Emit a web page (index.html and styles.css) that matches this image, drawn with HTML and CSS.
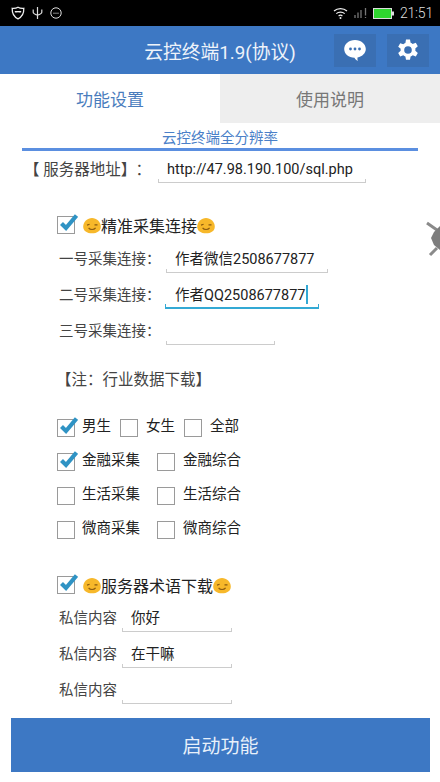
FILE: index.html
```html
<!DOCTYPE html>
<html lang="zh">
<head>
<meta charset="utf-8">
<title>云控终端</title>
<link rel="stylesheet" href="styles.css">
</head>
<body>
<svg class="defs" width="0" height="0" aria-hidden="true">
  <symbol id="tick" viewBox="0 0 20 20">
    <path d="M3.5 10.5 L8 15 L18.5 2.5" fill="none" stroke="#2f93c4" stroke-width="4.2"/>
  </symbol>
  <symbol id="wink" viewBox="0 0 18 16">
    <path d="M9 .4C13.5.4 17.8 4.300 17.800 9.200 17.800 13.400 14 15.800 9 15.800 4 15.800.2 13.400.2 9.200.2 4.300 4.500.4 9 .4Z" fill="#f7b82a"/>
    <path d="M4 7.600 6.600 6.800M11.500 7.400h3" stroke="#8a5a10" stroke-width="1.100" fill="none"/>
    <path d="M5.600 10.400C7 12.600 11 12.600 12.600 10.400" stroke="#8a5a10" stroke-width="1.100" fill="none"/>
  </symbol>
</svg>
<div class="page">
  <div class="status">
    <div class="status-left">
      <svg width="14" height="14" viewBox="0 0 14 14"><path d="M7 1.200C9 2.400 11 2.500 12.800 2.300 13 7.500 11 11 7 12.800 3 11 1 7.500 1.200 2.300 3 2.500 5 2.400 7 1.200Z" fill="none" stroke="#eee" stroke-width="1.300"/><path d="M3.800 5h6.400v1.200C9 7 8.400 6.400 7 6.200 5.600 6.400 5 7 3.800 6.200Z" fill="#eee"/></svg>
      <svg width="11" height="14" viewBox="0 0 11 14"><path d="M5.500 1v12M1.200 3.500v2.800C1.200 7.600 3 8.400 5.500 9.200 8 8.400 9.800 7.600 9.800 6.300V3.500" fill="none" stroke="#ddd" stroke-width="1.200"/></svg>
      <svg width="12" height="12" viewBox="0 0 12 12"><circle cx="6" cy="6" r="5.200" fill="none" stroke="#ddd" stroke-width="1"/><path d="M3.400 6.200h1.200M5.400 6.200h1.200M7.400 6.200h1.200" stroke="#ddd" stroke-width="1"/></svg>
    </div>
    <div class="status-right">
      <svg width="15" height="12" viewBox="0 0 15 12"><path d="M1 4C4.600.8 10.400.8 14 4M3.300 6.600C5.600 4.600 9.400 4.600 11.700 6.600M5.600 9C6.600 8.200 8.400 8.200 9.400 9" fill="none" stroke="#eee" stroke-width="1.200"/><circle cx="7.500" cy="11" r="1" fill="#eee"/></svg>
      <svg width="13" height="12" viewBox="0 0 13 12"><path d="M1 11V8M4 11V5.500M7 11V3M11.500 8.500V1M11.500 11V10" fill="none" stroke="#777" stroke-width="1.300"/></svg>
      <svg width="21" height="11" viewBox="0 0 21 11"><rect x=".5" y=".5" width="18" height="10" fill="#2fd62f" stroke="#ddd"/><rect x="19" y="3.500" width="2" height="4" fill="#ddd"/></svg>
      <span class="time">21:51</span>
    </div>
  </div>

  <header class="appbar">
    <div></div>
    <div class="title">云控终端1.9(协议)</div>
    <div class="actions">
      <div class="action">
        <svg width="24" height="24" viewBox="0 0 24 24"><path d="M12 2C5.800 2 1.200 6 1.200 11c0 4.900 4.500 8.700 10.300 8.800 .6 1.200 1.700 2.400 3.300 3.200-.4-1.200-.5-2.400-.3-3.500C19.500 18.400 22.800 15 22.800 11 22.800 6 18.200 2 12 2Z" fill="#fff"/><circle cx="7.500" cy="11" r="1.400" fill="#3a6fb3"/><circle cx="12" cy="11" r="1.400" fill="#3a6fb3"/><circle cx="16.500" cy="11" r="1.400" fill="#3a6fb3"/></svg>
      </div>
      <div class="action">
        <svg width="24" height="24" viewBox="0 0 24 24"><path fill="#fff" fill-rule="evenodd" d="M10 1.500h4l.6 3.200c.8.300 1.500.7 2.100 1.200l3.100-1.100 2 3.500-2.500 2.100c.1.400.1.800.1 1.200s0 .8-.1 1.200l2.500 2.100-2 3.500-3.100-1.100c-.6.500-1.300.9-2.100 1.200l-.6 3.200h-4l-.6-3.200c-.8-.3-1.500-.7-2.100-1.200l-3.100 1.100-2-3.500 2.500-2.100C4.600 12.800 4.600 12.400 4.600 12s0-.8.100-1.200L2.200 8.700l2-3.500 3.100 1.100c.6-.5 1.300-.9 2.100-1.200ZM12 8.200a3.800 3.800 0 1 0 0 7.600 3.800 3.800 0 0 0 0-7.600Z"/></svg>
      </div>
    </div>
  </header>

  <nav class="tabs">
    <div class="tab tab-on">功能设置</div>
    <div class="tab tab-off">使用说明</div>
  </nav>

  <div class="subtitle">云控终端全分辨率</div>

  <div class="server">
    <span class="server-label">【 服务器地址】<span class="colon">：</span></span>
    <div class="field field-server">http://47.98.190.100/sql.php</div>
  </div>

  <div class="check-row head-one">
    <span class="cb"><svg class="tick"><use href="#tick"/></svg></span>
    <svg class="emoji"><use href="#wink"/></svg><span class="head-text">精准采集连接</span><svg class="emoji"><use href="#wink"/></svg>
  </div>

  <div class="form-row first-link">
    <span class="label label-wide">一号采集连接：</span>
    <div class="field field-one">作者微信2508677877</div>
  </div>
  <div class="form-row">
    <span class="label label-wide">二号采集连接：</span>
    <div class="field field-two">作者QQ2508677877<span class="caret"></span></div>
  </div>
  <div class="form-row">
    <span class="label label-wide">三号采集连接：</span>
    <div class="field field-three"></div>
  </div>

  <div class="note">【注：行业数据下载】</div>

  <div class="opts">
    <div class="opt-row">
      <span class="cb"><svg class="tick"><use href="#tick"/></svg></span><span class="opt-text gap-a">男生</span>
      <span class="cb"></span><span class="opt-text wide gap-a">女生</span>
      <span class="cb"></span><span class="opt-text wide">全部</span>
    </div>
    <div class="opt-row">
      <span class="cb"><svg class="tick"><use href="#tick"/></svg></span><span class="opt-text gap-b">金融采集</span>
      <span class="cb"></span><span class="opt-text wide">金融综合</span>
    </div>
    <div class="opt-row">
      <span class="cb"></span><span class="opt-text gap-b">生活采集</span>
      <span class="cb"></span><span class="opt-text wide">生活综合</span>
    </div>
    <div class="opt-row">
      <span class="cb"></span><span class="opt-text gap-b">微商采集</span>
      <span class="cb"></span><span class="opt-text wide">微商综合</span>
    </div>
  </div>

  <div class="check-row head-two">
    <span class="cb"><svg class="tick"><use href="#tick"/></svg></span>
    <svg class="emoji"><use href="#wink"/></svg><span class="head-text">服务器术语下载</span><svg class="emoji"><use href="#wink"/></svg>
  </div>

  <div class="form-row first-msg">
    <span class="label label-msg">私信内容</span>
    <div class="field field-msg">你好</div>
  </div>
  <div class="form-row">
    <span class="label label-msg">私信内容</span>
    <div class="field field-msg">在干嘛</div>
  </div>
  <div class="form-row">
    <span class="label label-msg">私信内容</span>
    <div class="field field-msg"></div>
  </div>

  <div class="start">启动功能</div>

  <svg class="edge" width="15" height="38" viewBox="0 0 15 38"><path d="M2 2 12 9M5 34 12 27" stroke="#8a8a8a" stroke-width="3" fill="none"/><path d="M15 5 9 11 6 17 9 24 15 29Z" fill="#7d7d7d"/></svg>
</div>
</body>
</html>
```

FILE: styles.css
```css
* { box-sizing: border-box; }
html, body { margin: 0; padding: 0; background: #fff; }
body { font-family: "Roboto", "Noto Sans CJK SC", sans-serif; color: #222; }
.defs { position: absolute; }
.page { position: relative; width: 440px; height: 782px; overflow: hidden; background: #fff; display: flex; flex-direction: column; }

.status { height: 26px; background: #000; display: flex; justify-content: space-between; align-items: center; padding: 0 7px 0 11px; flex: none; }
.status-left { display: flex; align-items: center; gap: 7px; }
.status-right { display: flex; align-items: center; gap: 6px; }
.time { color: #ddd; font-size: 14px; font-weight: 300; line-height: 26px; letter-spacing: -.2px; }

.appbar { height: 48px; background: #3d78c4; display: grid; grid-template-columns: 1fr auto 1fr; align-items: center; flex: none; }
.title { color: #eef3fa; font-size: 18.800px; white-space: nowrap; }
.actions { display: flex; justify-content: flex-end; gap: 11px; padding-right: 11px; }
.action { width: 42px; height: 33px; background: #3a6fb3; display: flex; align-items: center; justify-content: center; }

.tabs { display: flex; height: 49px; flex: none; }
.tab { width: 220px; display: flex; align-items: center; justify-content: center; font-size: 17px; }
.tab-on { color: #4a7dbd; background: #fff; }
.tab-off { color: #777; background: #eee; }

.subtitle { margin: 0 22px; height: 28px; padding-top: 6px; border-bottom: 3px solid #5b8fe0; text-align: center; color: #4a80c8; font-size: 14.500px; line-height: 19px; flex: none; }

.field { border-bottom: 1px solid #ccc; font-size: 14.500px; color: #222; white-space: nowrap; position: relative; }
.field::before, .field::after { content: ""; position: absolute; bottom: 0; width: 1px; height: 3px; border-left: 1px solid #ccc; }
.field::before { left: 0; }
.field::after { right: -1px; }

.server { display: flex; align-items: flex-start; margin-top: 5px; padding-left: 24px; height: 27px; flex: none; }
.server-label { width: 134px; font-size: 15.500px; color: #444; line-height: 28px; white-space: nowrap; }
.colon { margin-left: 7px; }
.field-server { width: 208px; height: 27px; line-height: 27px; padding-left: 9px; }

.check-row { display: flex; align-items: center; padding-left: 57px; height: 20px; flex: none; }
.head-one { margin-top: 32px; }
.head-two { margin-top: 36px; }
.head-text { font-size: 16px; color: #222; white-space: nowrap; }
.emoji { width: 18px; height: 17px; flex: none; }
.check-row .emoji:first-of-type { margin-left: 8px; }

.cb { width: 18px; height: 18px; border: 1px solid #9a9a9a; background: #fff; display: block; flex: none; position: relative; }
.tick { position: absolute; left: 0; top: -4px; width: 20px; height: 20px; }

.form-row { display: flex; align-items: flex-start; padding-left: 59px; height: 26px; margin-top: 10px; flex: none; }
.first-link { margin-top: 12px; }
.first-msg { margin-top: 11px; }
.label { font-size: 14.500px; color: #444; line-height: 26px; white-space: nowrap; }
.label-wide { width: 107px; }
.label-msg { width: 63px; }
.field-one { width: 162px; height: 26px; line-height: 26px; padding-left: 9px; }
.field-two { width: 154px; height: 26px; line-height: 26px; padding-left: 10px; margin-left: -1px; border-bottom: 2px solid #33a9d4; }
.field-two::before, .field-two::after { border-left-color: #33a9d4; }
.field-three { width: 109px; height: 26px; }
.field-msg { width: 110px; height: 26px; line-height: 26px; padding-left: 9px; }
.caret { display: inline-block; width: 2px; height: 19px; background: #33a9d4; vertical-align: -4px; margin-left: 1px; }

.note { margin-top: 23px; padding-left: 56px; font-size: 15.500px; color: #444; line-height: 24px; flex: none; }

.opts { margin-top: 27px; padding-left: 57px; display: flex; flex-direction: column; gap: 16px; flex: none; }
.opt-row { display: flex; align-items: center; height: 18px; }
.opt-text { margin-left: 7px; font-size: 14.500px; line-height: 16px; padding-bottom: 2px; color: #222; white-space: nowrap; }
.wide { margin-left: 8px; }
.gap-a { margin-right: 9px; }
.gap-b { margin-right: 17px; }

.start { margin: 14px 10px 0 11px; height: 54px; padding-bottom: 2px; background: #3d78c4; color: #e8f0fa; font-size: 19px; display: flex; align-items: center; justify-content: center; flex: none; }

.edge { position: absolute; left: 425px; top: 221px; }
```
